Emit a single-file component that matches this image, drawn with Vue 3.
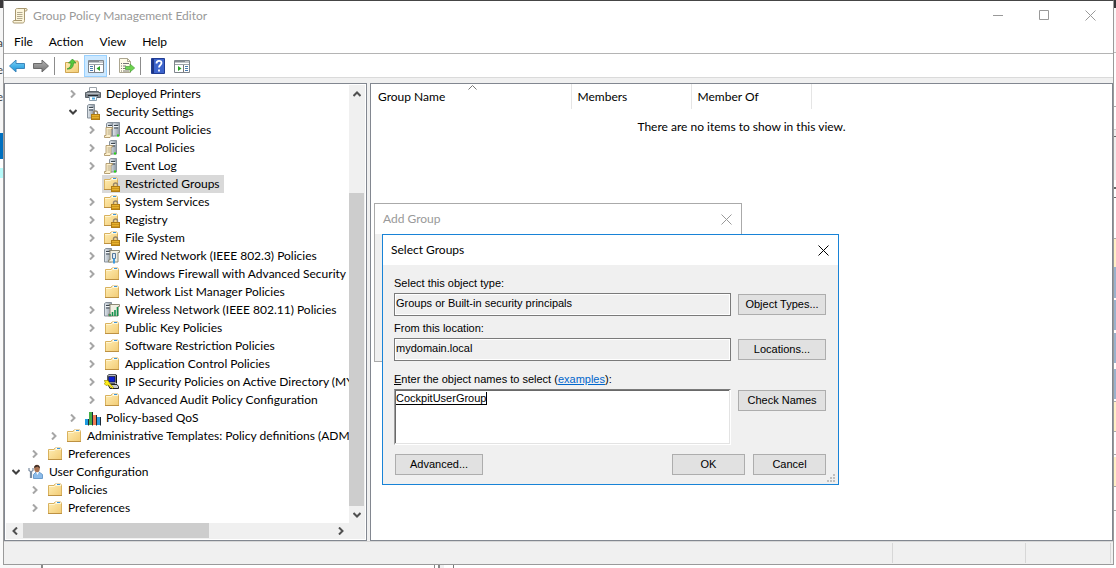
<script setup>
import { ref } from 'vue'

const menus = ['File', 'Action', 'View', 'Help']

const nodes = [
  { level: 3, state: 'closed', icon: 'printer', label: 'Deployed Printers' },
  { level: 3, state: 'open', icon: 'server-lock', label: 'Security Settings' },
  { level: 4, state: 'closed', icon: 'servers', label: 'Account Policies' },
  { level: 4, state: 'closed', icon: 'server-scroll', label: 'Local Policies' },
  { level: 4, state: 'closed', icon: 'server-scroll', label: 'Event Log' },
  { level: 4, state: 'none', icon: 'folder-lock', label: 'Restricted Groups' },
  { level: 4, state: 'closed', icon: 'folder-lock', label: 'System Services' },
  { level: 4, state: 'closed', icon: 'folder-lock', label: 'Registry' },
  { level: 4, state: 'closed', icon: 'folder-lock', label: 'File System' },
  { level: 4, state: 'closed', icon: 'wired', label: 'Wired Network (IEEE 802.3) Policies' },
  { level: 4, state: 'closed', icon: 'folder', label: 'Windows Firewall with Advanced Security' },
  { level: 4, state: 'none', icon: 'folder', label: 'Network List Manager Policies' },
  { level: 4, state: 'closed', icon: 'wireless', label: 'Wireless Network (IEEE 802.11) Policies' },
  { level: 4, state: 'closed', icon: 'folder', label: 'Public Key Policies' },
  { level: 4, state: 'closed', icon: 'folder', label: 'Software Restriction Policies' },
  { level: 4, state: 'closed', icon: 'folder', label: 'Application Control Policies' },
  { level: 4, state: 'closed', icon: 'ipsec', label: 'IP Security Policies on Active Directory (MYDOMAIN.LOCAL)' },
  { level: 4, state: 'closed', icon: 'folder', label: 'Advanced Audit Policy Configuration' },
  { level: 3, state: 'closed', icon: 'bars', label: 'Policy-based QoS' },
  { level: 2, state: 'closed', icon: 'folder', label: 'Administrative Templates: Policy definitions (ADMX files)' },
  { level: 1, state: 'closed', icon: 'folder', label: 'Preferences' },
  { level: 0, state: 'open', icon: 'user', label: 'User Configuration' },
  { level: 1, state: 'closed', icon: 'folder', label: 'Policies' },
  { level: 1, state: 'closed', icon: 'folder', label: 'Preferences' }
]

const selected = ref('Restricted Groups')
const objectType = ref('Groups or Built-in security principals')
const location = ref('mydomain.local')
const names = ref('CockpitUserGroup')
</script>

<template>
  <div class="desktop">
    <svg class="defs" aria-hidden="true">
      <defs>
        <linearGradient id="g-folder" x1="0" y1="0" x2="1" y2="1">
          <stop offset="0" stop-color="#ffeeb5" /><stop offset="1" stop-color="#f2cb74" />
        </linearGradient>
        <linearGradient id="g-server" x1="0" y1="0" x2="1" y2="0">
          <stop offset="0" stop-color="#e3e9ee" /><stop offset="1" stop-color="#8d98a3" />
        </linearGradient>
        <linearGradient id="g-blue" x1="0" y1="0" x2="0" y2="1">
          <stop offset="0" stop-color="#7fd4f7" /><stop offset="1" stop-color="#1290d8" />
        </linearGradient>
        <linearGradient id="g-gray" x1="0" y1="0" x2="0" y2="1">
          <stop offset="0" stop-color="#b5b5b5" /><stop offset="1" stop-color="#6f6f6f" />
        </linearGradient>
      </defs>
      <symbol id="folder" viewBox="0 0 16 16">
        <path d="M1.500 3.500H7l1-1.500h6v1.500h.5v10h-13z" fill="url(#g-folder)" stroke="#d9b25e" />
        <path d="M8.500 2.500h5" stroke="#fff" /><path d="M10 2.500h3" stroke="#3c96dc" />
        <path d="M2 4.500h5.500l1-1H14" stroke="#fff6d5" fill="none" />
        <path d="M1 13.500h14" stroke="#bd9142" />
      </symbol>
      <symbol id="padlock" viewBox="0 0 9 10">
        <path d="M2.500 5V3a2 2 0 0 1 4 0v2" fill="none" stroke="#96866a" stroke-width="1.400" />
        <rect x=".5" y="4.500" width="8" height="5" fill="#e6b12c" stroke="#b07c14" />
        <path d="M1 6.500h7M1 8.500h7" stroke="#b98213" stroke-width=".6" />
      </symbol>
      <symbol id="folder-lock" viewBox="0 0 16 16">
        <use href="#folder" x="-1" y="0" width="16" height="16" /><use href="#padlock" x="7" y="6" width="9" height="10" />
      </symbol>
      <symbol id="tower" viewBox="0 0 8 15">
        <path d="M.5 1.500L2 .5h5.500v13.500h-7z" fill="url(#g-server)" stroke="#87919b" />
        <path d="M2 3.500h4M2 6h4" stroke="#3d4750" /><path d="M1.500 4.500h5" stroke="#f5f8fa" />
      </symbol>
      <symbol id="scroll" viewBox="0 0 9 11">
        <path d="M2 .5h6.500v1.500H7v7.500L6 10.500H.5V8.500H2z" fill="#fdf0cc" stroke="#a58b5b" stroke-width=".8" />
        <path d="M3.500 3h2.500M3.500 5h2.500M3.500 7h2.500" stroke="#a29474" stroke-width=".8" />
      </symbol>
      <symbol id="server-lock" viewBox="0 0 16 16">
        <use href="#tower" x="2" y="0" width="8" height="15" /><use href="#padlock" x="6" y="6" width="9" height="10" />
      </symbol>
      <symbol id="servers" viewBox="0 0 16 16">
        <use href="#tower" x="2" y="0" width="8" height="15" />
        <use href="#tower" x="8" y="0" width="8" height="15" />
        <use href="#scroll" x="0" y="5" width="9" height="11" /><path d="M13 13.500h2" stroke="#24d514" stroke-width="2" />
      </symbol>
      <symbol id="server-scroll" viewBox="0 0 16 16">
        <use href="#tower" x="5" y="0" width="8" height="15" />
        <use href="#scroll" x="0" y="5" width="9" height="11" /><path d="M10 13.500h2" stroke="#24d514" stroke-width="2" />
      </symbol>
      <symbol id="wired" viewBox="0 0 16 16">
        <use href="#tower" x="0" y="0" width="8" height="15" />
        <path d="M5 2.500h10.500v2H14V14H4.500V12H6V2.500z" fill="#f1efe2" stroke="#8d8a76" />
        <path d="M8.500 5.500h3v5h-3z" fill="#dcebf8" stroke="#56789b" /><path d="M10 10.500v5" stroke="#3f9bdc" stroke-width="2" />
      </symbol>
      <symbol id="wireless" viewBox="0 0 16 16">
        <use href="#tower" x="0" y="0" width="8" height="15" />
        <path d="M5 2.500h10.500v2H14V14H4.500V12H6V2.500z" fill="#f1efe2" stroke="#8d8a76" />
        <path d="M6 14v-2M8.500 14v-4M11 14V8M13.500 14V5" stroke="#11904d" stroke-width="1.600" />
      </symbol>
      <symbol id="printer" viewBox="0 0 16 16">
        <path d="M4.500 1.500h7v5h-7z" fill="#fff" stroke="#9ba3aa" />
        <path d="M.5 6.500h2V5.500h11v1h2v5h-15z" fill="#7d848b" stroke="#5b6268" />
        <path d="M1.500 7.500h13" stroke="#b7bdc2" /><path d="M3 9.500h10" stroke="#252a2e" />
        <path d="M4.500 10.500h7v4h-7z" fill="#fff" stroke="#8ba0b0" /><path d="M7 12.500h3" stroke="#48a7dd" stroke-width="2" />
      </symbol>
      <symbol id="ipsec" viewBox="0 0 16 16">
        <path d="M3.500 1.500L5 .5h7v8l-1 1H3.500z" fill="#b9bcc2" stroke="#55585e" />
        <path d="M12.500 1v8.500" stroke="#17181a" />
        <path d="M4.500 2.500H11V8H4.500z" fill="#0a1fd2" stroke="#111" stroke-width=".6" />
        <path d="M4 10.500h9l1.500 2v2H6z" fill="#c7c9cc" stroke="#222" />
        <path d="M0 6.500h4l1.500 2.500 4 4.500-1 1L4 11l-2 .5L0 9.500l1.500-1z" fill="#ffee18" stroke="#8c8200" stroke-width=".6" />
      </symbol>
      <symbol id="bars" viewBox="0 0 16 16">
        <path d="M0 9h3v6H0z" fill="#1e9ce0" /><path d="M4 2h3v13H4z" fill="#47ae49" />
        <path d="M8 5h3v10H8z" fill="#ef7d55" /><path d="M12 7h3v8h-3z" fill="#2d9ade" />
        <path d="M3.500 9v6.500M7.500 2v13.500M11.500 5v10.500M15.500 7v8.500" stroke="#1b2a36" />
      </symbol>
      <symbol id="user" viewBox="0 0 16 16">
        <path d="M5.500 14.500v-4L8 8h3l3.500 2.500v4z" fill="#8dbcea" stroke="#6d9dcc" />
        <path d="M8 8l1.500 3L11 8z" fill="#fff" />
        <ellipse cx="9" cy="4.500" rx="2.800" ry="3.700" fill="#aa7352" /><path d="M6 4c0-4 6-4 6 .5L9.500 2.500z" fill="#3a2d27" />
        <path d="M1 4v2.500l1.500 1V14M5 4v2.500L3.500 7.500V14" fill="none" stroke="#7a8ba0" stroke-width="1.200" />
      </symbol>
      <symbol id="parchment" viewBox="0 0 16 16">
        <path d="M3.500 1.500C4 .5 5 .5 6 .5h8c1.500 0 1.500 2.500 0 2.500h-1.500v9.500c0 2-1 2.500-2 2.500H2C.5 15 .5 12.500 2 12.500h1.500z" fill="#fdf6dc" stroke="#a89870" />
        <path d="M5 4.500h5.500M5 6.500h5.500M5 8.500h5.500M5 10.500h5.500" stroke="#b3aa90" />
        <path d="M12.500 3V1M10 12.500H3" stroke="#a89870" fill="none" />
      </symbol>
      <symbol id="back" viewBox="0 0 16 16">
        <path d="M.5 8L7 2v3.500h8.500v5H7V14z" fill="url(#g-blue)" stroke="#3d86bb" />
      </symbol>
      <symbol id="forward" viewBox="0 0 16 16">
        <path d="M15.500 8L9 2v3.500H.5v5H9V14z" fill="url(#g-gray)" stroke="#6b6b6b" />
      </symbol>
      <symbol id="folder-up" viewBox="0 0 16 16">
        <path d="M1.500 4.500H7l1-1.500h6v1.500h.5v10h-13z" fill="url(#g-folder)" stroke="#cfa552" />
        <path d="M3 11c3-1 4-3 4-6H4.500L8.500 1 12 5H9.500c0 4-2 6.500-6.500 6z" fill="#56c83c" stroke="#37942b" stroke-width=".7" />
      </symbol>
      <symbol id="panes" viewBox="0 0 16 16">
        <path d="M.5 2.500h15v12H.5z" fill="#fff" stroke="#7e848b" /><path d="M1 3.500h14" stroke="#858b92" stroke-width="2" />
        <path d="M11.500 3.500h1M13.500 3.500h1" stroke="#fff" /><path d="M1 6.500h14" stroke="#9ca2a9" />
      </symbol>
      <symbol id="tree-pane" viewBox="0 0 16 16">
        <use href="#panes" width="16" height="16" />
        <path d="M6.500 7v7" stroke="#777" /><path d="M2 8.500h3M2 10.500h3M2 12.500h3" stroke="#4779ae" />
        <path d="M12 8v5l-3.500-2.500z" fill="#2aa325" />
      </symbol>
      <symbol id="action-pane" viewBox="0 0 16 16">
        <use href="#panes" width="16" height="16" />
        <path d="M9.500 7v7" stroke="#777" /><path d="M11 8.500h3M11 10.500h3M11 12.500h3" stroke="#4779ae" />
        <path d="M4 8v5l3.500-2.500z" fill="#2aa325" />
      </symbol>
      <symbol id="export" viewBox="0 0 16 16">
        <path d="M.5.5h8l3 3v11H.5z" fill="#fffce8" stroke="#aca690" /><path d="M8.500.5v3h3" fill="none" stroke="#aca690" />
        <path d="M2 5.500h1M4 5.500h6M2 8h1M4 8h3M2 10.500h1M4 10.500h3M2 13h1M4 13h6" stroke="#777" />
        <path d="M6.500 8.500H11V6l4.700 4-4.700 4v-2.500H6.500z" fill="#6dd34e" stroke="#4ba23c" stroke-width=".7" />
      </symbol>
      <symbol id="help" viewBox="0 0 16 16">
        <path d="M1.500.5h13v15h-13z" fill="#3d64cc" stroke="#213c92" /><path d="M3 1v14" stroke="#1d3585" stroke-width="2" />
        <path d="M6.500 5.500c0-3.500 5-3.500 5-.5 0 2-2.500 2-2.500 4.500M9 11.500v2" fill="none" stroke="#fff" stroke-width="1.800" />
      </symbol>
      <symbol id="close" viewBox="0 0 11 11">
        <path d="M.5.5l10 10M10.500.5l-10 10" stroke="currentColor" fill="none" />
      </symbol>
      <symbol id="chevron" viewBox="0 0 8 8">
        <path d="M2 0.500L5.500 4 2 7.500" fill="none" stroke="currentColor" stroke-width="2" />
      </symbol>
    </svg>

    <div class="behind-left" aria-hidden="true"><span>a</span><span>e</span><span>e</span></div>
    <div class="behind-right" aria-hidden="true"></div>
    <div class="behind-bottom" aria-hidden="true"></div>

    <main class="window">
      <header class="titlebar">
        <svg class="icon"><use href="#parchment" /></svg>
        <h1>Group Policy Management Editor</h1>
        <div class="caption">
          <button type="button" aria-label="Minimize"><svg viewBox="0 0 11 11"><path d="M0 5.500h10" stroke="currentColor" /></svg></button>
          <button type="button" aria-label="Maximize"><svg viewBox="0 0 11 11"><path d="M.5.5h9v9h-9z" fill="none" stroke="currentColor" /></svg></button>
          <button type="button" aria-label="Close"><svg><use href="#close" /></svg></button>
        </div>
      </header>

      <nav class="menubar">
        <button v-for="m in menus" :key="m" type="button">{{ m }}</button>
      </nav>

      <div class="toolbar" role="toolbar">
        <button type="button" aria-label="Back"><svg class="icon"><use href="#back" /></svg></button>
        <button type="button" aria-label="Forward"><svg class="icon"><use href="#forward" /></svg></button>
        <i class="sep"></i>
        <button type="button" aria-label="Up one level"><svg class="icon"><use href="#folder-up" /></svg></button>
        <button type="button" class="pressed" aria-label="Show console tree"><svg class="icon"><use href="#tree-pane" /></svg></button>
        <i class="sep"></i>
        <button type="button" aria-label="Export list"><svg class="icon"><use href="#export" /></svg></button>
        <i class="sep"></i>
        <button type="button" aria-label="Help"><svg class="icon"><use href="#help" /></svg></button>
        <button type="button" aria-label="Show action pane"><svg class="icon"><use href="#action-pane" /></svg></button>
      </div>

      <div class="panes">
        <section class="tree-pane">
          <ul class="tree" role="tree">
            <li v-for="(n, i) in nodes" :key="i" role="treeitem" :style="{ paddingLeft: n.level * 19 + 'px' }">
              <button v-if="n.state !== 'none'" type="button" class="toggle" :class="n.state" aria-label="Toggle"><svg><use href="#chevron" /></svg></button>
              <span v-else class="toggle"></span>
              <button type="button" class="node" :class="{ selected: n.label === selected }" @click="selected = n.label">
                <svg class="icon"><use :href="'#' + n.icon" /></svg>{{ n.label }}
              </button>
            </li>
          </ul>
          <div class="vscroll">
            <button type="button" class="up" aria-label="Scroll up"><svg><use href="#chevron" /></svg></button>
            <div class="before"></div>
            <div class="thumb"></div>
            <button type="button" class="down" aria-label="Scroll down"><svg><use href="#chevron" /></svg></button>
          </div>
          <div class="hscroll">
            <button type="button" class="left" aria-label="Scroll left"><svg><use href="#chevron" /></svg></button>
            <div class="thumb"></div>
            <div class="after"></div>
            <button type="button" aria-label="Scroll right"><svg><use href="#chevron" /></svg></button>
          </div>
          <div class="corner"></div>
        </section>

        <section class="list-pane">
          <table>
            <thead>
              <tr>
                <th class="wide">Group Name<svg class="sort" viewBox="0 0 9 5"><path d="M.5 4.500l4-4 4 4" fill="none" stroke="#777" /></svg></th>
                <th>Members</th>
                <th>Member Of</th>
                <td class="rest"></td>
              </tr>
            </thead>
            <tbody>
              <tr><td colspan="4" class="empty">There are no items to show in this view.</td></tr>
            </tbody>
          </table>
        </section>
      </div>

      <footer class="status"><span></span><span></span><span></span></footer>
    </main>

    <section class="dialog add-group" role="dialog" aria-labelledby="add-title">
      <header>
        <h2 id="add-title">Add Group</h2>
        <button type="button" aria-label="Close"><svg><use href="#close" /></svg></button>
      </header>
    </section>

    <section class="dialog select-groups" role="dialog" aria-labelledby="select-title">
      <header>
        <h2 id="select-title">Select Groups</h2>
        <button type="button" aria-label="Close"><svg><use href="#close" /></svg></button>
      </header>
      <form @submit.prevent>
        <div class="row">
          <div class="field">
            <label for="type">Select this object type:</label>
            <input id="type" v-model="objectType" type="text" readonly />
          </div>
          <button type="button" class="push">Object Types...</button>
        </div>
        <div class="row">
          <div class="field">
            <label for="location">From this location:</label>
            <input id="location" v-model="location" type="text" readonly />
          </div>
          <button type="button" class="push">Locations...</button>
        </div>
        <div class="row names">
          <div class="field">
            <div class="prompt"><label for="names"><u>E</u>nter the object names to select</label> (<a href="#examples">examples</a>):</div>
            <div class="edit">
              <textarea id="names" v-model="names" spellcheck="false"></textarea>
              <i class="caret"></i>
            </div>
          </div>
          <button type="button" class="push">Check Names</button>
        </div>
        <div class="actions">
          <button type="button" class="push">Advanced...</button>
          <button type="submit" class="push short">OK</button>
          <button type="button" class="push short">Cancel</button>
        </div>
      </form>
      <svg class="grip" viewBox="0 0 8 8"><path d="M6 0h2v2H6zM3 3h2v2H3zM6 3h2v2H6zM0 6h2v2H0zM3 6h2v2H3zM6 6h2v2H6z" fill="#bfbfbf" /></svg>
    </section>
  </div>
</template>

<style>
body { margin: 0; }
</style>

<style scoped>
.desktop {
  position: relative;
  display: grid;
  grid-template-columns: 3px minmax(0, 1fr) 2px;
  grid-template-rows: minmax(0, 1fr) 3px;
  height: 100vh;
  overflow: hidden;
  background: #fff;
  color: #000;
  font: 12px/18px Lato, "Open Sans", sans-serif;
}
.desktop *, .desktop *::before { box-sizing: border-box; }
.defs { position: absolute; width: 0; height: 0; }
button { padding: 0; border: 0; background: none; color: inherit; font: inherit; }
h1, h2 { margin: 0; font: inherit; }
.icon { display: block; flex: none; width: 16px; height: 16px; }

.behind-left {
  grid-area: 1 / 1;
  display: flex;
  flex-direction: column;
  align-items: flex-end;
  gap: 9px;
  padding-top: 34px;
  overflow: hidden;
  color: #444;
  background: linear-gradient(#3b393b 8px, #f6f6f6 8px 133px, #0070c0 133px 159px, #fff 159px 168px, #b5fafa 168px 178px, #fafafa 178px);
}
.behind-right {
  grid-area: 1 / 3;
  background: linear-gradient(#343638 8px, #f8f8f8 8px 52px, #bbb 52px 53px, #fff 53px 106px, #aaa 106px 107px, #fff 107px 129px, #ccc 129px 130px, #eee 130px 136px, #666 136px 137px, #eee 137px 180px, #fff 180px 187px, #666 187px 189px, #fff 189px 197px, #666 197px 198px, #fff 198px 238px, #aaa 238px 239px, #fff0c6 239px 267px, #9ab2cc 267px 298px, #fff 298px 300px, #9ab2cc 300px 330px, #fff 330px 333px, #9ab2cc 333px 363px, #fff 363px 369px, #9ab2cc 369px 399px, #fff 399px 401px, #aaa 401px 402px, #fff0c6 402px 431px, #aaa 431px 432px, #fff 432px 454px, #aaa 454px 455px, #fff 455px 457px, #fff0c6 457px 486px, #aaa 486px 487px, #fff 487px 510px, #aaa 510px 511px, #fff 511px);
}
.behind-bottom {
  grid-area: 2 / 1 / 3 / 4;
  background: linear-gradient(90deg, #f8f8f8 41px, #888 41px 43px, #fff 43px 434px, #888 434px 435px, #fff 435px 438px, #888 438px 440px, #f0f0f0 440px 444px, #fff 444px 453px, #777 453px 454px, #fff 454px);
}

.window {
  grid-area: 1 / 2;
  display: flex;
  flex-direction: column;
  border: 1px solid #9a9a9a;
  border-top-color: #454545;
  background: #f0f0f0;
}
.titlebar { display: flex; align-items: center; height: 30px; padding-left: 8px; background: #fff; color: #999; }
.titlebar h1 { flex: 1; padding-left: 5px; }
.caption { display: flex; height: 28px; align-self: flex-start; }
.caption button { display: grid; place-items: center; width: 46px; }
.caption svg, .dialog header svg { width: 11px; height: 11px; }
.menubar { display: flex; height: 22px; padding-left: 2px; background: #fff; }
.menubar button { padding: 0 8px; }
.toolbar { display: flex; align-items: center; gap: 1px; height: 25px; padding-left: 1px; border-top: 1px solid #b4b4b4; border-bottom: 1px solid #dadada; background: #fff; }
.toolbar button { display: grid; place-items: center; width: 23px; height: 22px; }
.toolbar .pressed { border: 1px solid #99d1ff; background: #cce8ff; }
.toolbar .sep { width: 1px; height: 18px; margin: 0 4px 0 1px; background: #8c8c8c; }

.panes { flex: 1; display: grid; grid-template-columns: 363px minmax(0, 1fr); gap: 3px; min-height: 0; padding-top: 5px; }
.tree-pane, .list-pane { border: 1px solid #828790; background: #fff; overflow: hidden; }
.tree-pane { display: grid; grid-template: minmax(0, 1fr) 16px / minmax(0, 1fr) 16px; padding: 1px; }
.tree { min-width: 0; margin: 0; padding: 0; overflow: hidden; list-style: none; }
.tree li { display: flex; height: 18px; white-space: nowrap; }
.toggle { display: grid; place-items: center; flex: none; width: 20px; color: #a6a6a6; }
.toggle svg, .vscroll svg, .hscroll svg { width: 8px; height: 8px; }
.toggle.open { color: #404040; }
.toggle.open svg, .down svg { transform: rotate(90deg); }
.up svg { transform: rotate(-90deg); }
.left svg { transform: rotate(180deg); }
.node { display: flex; align-items: center; gap: 5px; flex: none; padding: 0 4px 0 2px; }
.node.selected { background: #d9d9d9; }
.vscroll { display: flex; flex-direction: column; background: #f0f0f0; color: #505050; }
.vscroll button, .hscroll button { display: grid; place-items: center; flex: none; width: 15px; height: 17px; }
.vscroll .before { flex: 91; }
.vscroll .thumb { flex: 313; width: 15px; background: #cdcdcd; }
.hscroll { display: flex; background: #f0f0f0; color: #505050; }
.hscroll button { width: 17px; height: 15px; }
.hscroll .thumb { flex: 186; height: 15px; background: #cdcdcd; }
.hscroll .after { flex: 123; }
.corner { background: #f0f0f0; }

.list-pane table { width: 100%; border-collapse: collapse; table-layout: fixed; }
.list-pane th { position: relative; width: 120px; height: 25px; padding: 0 6px; border-right: 1px solid #e5e5e5; font-weight: 400; text-align: left; }
.list-pane th.wide { width: 200px; padding-left: 7px; }
.list-pane td { padding: 0; }
.sort { position: absolute; top: 1px; left: 97px; width: 9px; height: 5px; }
.list-pane .empty { height: 35px; text-align: center; }

.status { display: grid; grid-template-columns: minmax(0, 1fr) 133px 85px; height: 23px; padding-right: 2px; border-top: 1px solid #d7d7d7; }
.status span { margin: 1px 0; border-right: 1px solid #d7d7d7; }

.dialog { position: absolute; display: flex; flex-direction: column; background: #f0f0f0; }
.dialog header { display: flex; align-items: center; justify-content: space-between; height: 30px; padding: 0 9px 0 8px; background: #fff; }
.dialog header button { display: grid; place-items: center; }
.add-group { top: 203px; left: 374px; width: 368px; height: 159px; border: 1px solid #aaa; }
.add-group header { color: #999; }
.select-groups { top: 234px; left: 382px; width: 457px; border: 1px solid #1883d7; }
form { padding: 11px 12px 9px 11px; font: 11px/15px "Liberation Sans", Arial, sans-serif; }
.row { display: grid; grid-template-columns: minmax(0, 1fr) 88px; gap: 7px; align-items: end; margin-bottom: 5px; }
.field { display: grid; gap: 2px; }
.field input { width: 100%; height: 23px; margin: 0; padding: 0 1px 3px; border: 1px solid #7a7a7a; border-radius: 0; outline: 0; background: #f0f0f0; box-shadow: inset -1px -1px #fff, inset 1px 1px #fff; color: #000; font: inherit; }
.push { height: 21px; border: 1px solid #adadad; background: #e1e1e1; text-align: center; }
.row .push { margin-bottom: 1px; }
.row.names { margin: 11px 0 9px; align-items: start; }
.names .field { gap: 2px; }
.names .push { margin: 18px 0 0; }
.prompt a { color: #0066cc; }
.edit { position: relative; display: grid; }
textarea { width: 100%; height: 56px; margin: 0; padding: 0 1px; border: 1px solid; border-color: #7a7a7a #fff #fff #a0a0a0; border-radius: 0; outline: 0; box-shadow: inset -1px -1px #e3e3e3, inset 1px 1px #696969; resize: none; color: #000; background: #fff; font: inherit; line-height: 17px; text-decoration: underline; text-underline-offset: 2px; }
.caret { position: absolute; top: 3px; left: 92px; width: 1px; height: 13px; background: #000; }
.actions { display: flex; gap: 8px; padding-left: 1px; }
.actions .push { width: 88px; }
.actions .push:first-child { margin-right: auto; }
.actions .push.short { width: 73px; }
.grip { position: absolute; right: 3px; bottom: 2px; width: 8px; height: 8px; }
</style>
